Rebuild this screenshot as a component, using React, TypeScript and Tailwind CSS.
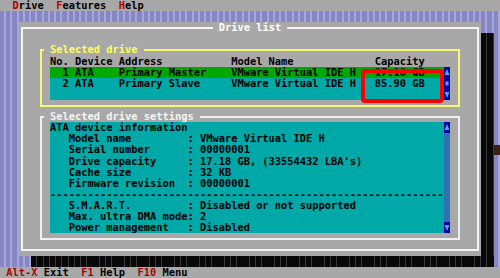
import React from "react";

/* ============================================================
   Text-mode "Drive list" screen (80x25 cells, 6.25 x 11.12 px)
=============================================================== */

type FrameProps = {
  line: string;
  title: string;
  titleCls: string;
  center?: boolean;
  className?: string;
  children?: React.ReactNode;
};

// box drawn with single-line characters, title sitting on the top edge
const Frame: React.FC<FrameProps> = ({ line, title, titleCls, center, className, children }) => (
  <div className={`flex flex-col ${className ?? ""}`}>
    <div className="flex h-[11.12px] shrink-0">
      <div className="w-[6.25px] shrink-0 pl-[2.125px] pt-[4.56px]">
        <div className={`h-full border-l-2 border-t-2 ${line}`} />
      </div>
      {center && (
        <div className="flex-1 pt-[4.56px]">
          <div className={`border-t-2 ${line}`} />
        </div>
      )}
      <span className={`whitespace-pre ${titleCls}`}>{` ${title} `}</span>
      <div className="flex-1 pt-[4.56px]">
        <div className={`border-t-2 ${line}`} />
      </div>
      <div className="w-[6.25px] shrink-0 pr-[2.125px] pt-[4.56px]">
        <div className={`h-full border-r-2 border-t-2 ${line}`} />
      </div>
    </div>

    <div className="flex flex-1 min-h-0">
      <div className="w-[6.25px] shrink-0 pl-[2.125px]">
        <div className={`h-full border-l-2 ${line}`} />
      </div>
      <div className="flex-1 min-w-0">{children}</div>
      <div className="w-[6.25px] shrink-0 pr-[2.125px]">
        <div className={`h-full border-r-2 ${line}`} />
      </div>
    </div>

    <div className="flex h-[11.12px] shrink-0">
      <div className="w-[6.25px] shrink-0 pl-[2.125px]">
        <div className={`h-[6.56px] border-l-2 border-b-2 ${line}`} />
      </div>
      <div className="flex-1">
        <div className={`h-[6.56px] border-b-2 ${line}`} />
      </div>
      <div className="w-[6.25px] shrink-0 pr-[2.125px]">
        <div className={`h-[6.56px] border-r-2 border-b-2 ${line}`} />
      </div>
    </div>
  </div>
);

const Arrow: React.FC<{ dir: "up" | "down" | "box"; color: string }> = ({ dir, color }) => (
  <svg width="6" height="11" viewBox="0 0 6 11" className="block">
    {dir === "up" && <polygon points="3,2 5.5,8 0.5,8" fill={color} />}
    {dir === "down" && <polygon points="0.5,3 5.5,3 3,9" fill={color} />}
    {dir === "box" && <rect x="1.5" y="3.5" width="3" height="4" fill={color} />}
  </svg>
);

const row = (a: string, b: string, c: string, d: string, e: string) =>
  a.padEnd(4) + b.padEnd(7) + c.padEnd(18) + d.padEnd(23) + e;

const drives = [
  { text: row("  1", "ATA", "Primary Master", "VMware Virtual IDE H", "17.18 GB"), bg: "bg-[#00a800]" },
  { text: row("  2", "ATA", "Primary Slave", "VMware Virtual IDE H", "85.90 GB"), bg: "bg-[#00a8a8]" },
  { text: "", bg: "bg-[#00a8a8]" },
];

const info = [
  ["Model name", "VMware Virtual IDE H"],
  ["Serial number", "00000001"],
  ["Drive capacity", "17.18 GB, (33554432 LBA's)"],
  ["Cache size", "32 KB"],
  ["Firmware revision", "00000001"],
];

const power = [
  ["S.M.A.R.T.", "Disabled or not supported"],
  ["Max. ultra DMA mode", "2"],
  ["Power management", "Disabled"],
];

const settingLines = [
  "ATA device information",
  ...info.map(([k, v]) => "   " + k.padEnd(19) + ": " + v),
  "-".repeat(63),
  ...power.map(([k, v]) => "   " + k.padEnd(19) + ": " + v),
];

const stripes =
  "bg-[repeating-linear-gradient(90deg,#8686c4_0px,#8686c4_4px,#a6a6d8_4px,#a6a6d8_6.25px)]";
const shadow =
  "bg-[repeating-linear-gradient(90deg,#080808_0px,#080808_5.4px,#383838_5.4px,#383838_6.25px)]";

export default function App() {
  return (
    <div className="relative w-[500px] h-[278px] overflow-hidden bg-[#a8a8a8] font-['DejaVu_Sans_Mono','Liberation_Mono',monospace] font-bold text-[10.38px] leading-[11.12px] tracking-[0px] text-black">
      {/* ========================== MENU ============================== */}
      <div className="h-[11.12px] pl-[12.5px] whitespace-pre">
        <span className="text-[#b00000]">D</span>rive{"  "}
        <span className="text-[#b00000]">F</span>eatures{"  "}
        <span className="text-[#b00000]">H</span>elp
      </div>

      {/* ========================== DESKTOP ============================== */}
      <div className={`flex h-[255.76px] ${stripes}`}>
        <div className="w-[18.75px] shrink-0" />

        <div className="w-[475px] shrink-0 flex flex-col pt-[11.12px]">
          <div className="flex h-[233.52px]">
            {/* dialog */}
            <Frame
              line="border-[#f4f4f4]"
              title="Drive list"
              titleCls="text-white"
              center
              className="w-[462.5px] h-full bg-[#a8a8a8] shrink-0"
            >
              <div className="flex flex-col">
                <div className="h-[11.12px]" />

                {/* selected drive */}
                <Frame
                  line="border-[#f8f870]"
                  title="Selected drive"
                  titleCls="text-[#ffff55]"
                  className="ml-[12.5px] w-[425px] h-[66.72px]"
                >
                  <div className="h-[11.12px] pl-[6.25px] whitespace-pre">
                    {row("No.", "Device", "Address", "Model Name", "Capacity")}
                  </div>
                  <div className="flex pl-[6.25px]">
                    <div className="w-[393.75px]">
                      {drives.map((d, i) => (
                        <div key={i} className={`h-[11.12px] whitespace-pre ${d.bg}`}>
                          {d.text}
                        </div>
                      ))}
                    </div>
                    <div className="w-[6.25px] bg-[#0000a8]">
                      <div className="h-[11.12px]"><Arrow dir="up" color="#4aa6ee" /></div>
                      <div className="h-[11.12px]"><Arrow dir="box" color="#4aa6ee" /></div>
                      <div className="h-[11.12px]"><Arrow dir="down" color="#4aa6ee" /></div>
                    </div>
                  </div>
                </Frame>

                {/* selected drive settings */}
                <Frame
                  line="border-[#f0f0f0]"
                  title="Selected drive settings"
                  titleCls="text-[#f4f4f4]"
                  className="ml-[12.5px] w-[425px] h-[133.44px]"
                >
                  <div className="flex h-full pl-[6.25px]">
                    <div className="w-[393.75px] bg-[#00a8a8]">
                      {settingLines.map((l, i) => (
                        <div key={i} className="h-[11.12px] whitespace-pre">
                          {l}
                        </div>
                      ))}
                    </div>
                    <div className="w-[6.25px] flex flex-col bg-[#2f72b4]">
                      <div className="h-[11.12px] bg-[#0000a8]"><Arrow dir="up" color="#4aa6ee" /></div>
                      <div className="flex-1" />
                      <div className="h-[11.12px] bg-[#0000a8]"><Arrow dir="down" color="#4aa6ee" /></div>
                    </div>
                  </div>
                </Frame>
              </div>
            </Frame>

            {/* right shadow */}
            <div className={`w-[12.5px] mt-[11.12px] ${shadow}`} />
          </div>

          {/* bottom shadow */}
          <div className={`ml-[12.5px] h-[11.12px] ${shadow}`} />
        </div>

        <div className="w-[6.25px] shrink-0 pt-[133.5px]">
          <div className="h-[10.5px] bg-[#3a2216]" />
        </div>
      </div>

      {/* ========================== STATUS ============================== */}
      <div className="h-[11.12px] pl-[6.25px] whitespace-pre">
        <span className="text-[#b00000]">Alt-X</span> Exit{"  "}
        <span className="text-[#b00000]">F1</span> Help{"  "}
        <span className="text-[#b00000]">F10</span> Menu
      </div>

      {/* annotation */}
      <div className="absolute left-[361px] top-[69px] w-[83px] h-[34px] border-4 border-[#ff0000] rounded-[4px]" />
    </div>
  );
}
